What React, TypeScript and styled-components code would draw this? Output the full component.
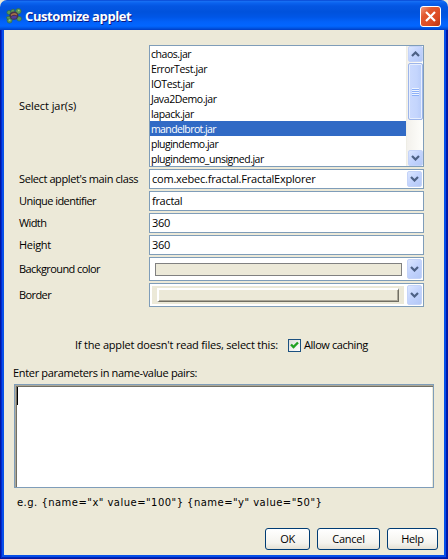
import React from "react";
import styled, { createGlobalStyle } from "styled-components";

const Global = createGlobalStyle`
  *, *::before, *::after { box-sizing: border-box; }
  html, body, #root { margin: 0; height: 100%; }
  body { background: #ece9d8; overflow: hidden; }
`;

const Window = styled.div`
  width: 448px;
  height: 559px;
  display: flex;
  flex-direction: column;
  background: #ece9d8;
  border-radius: 7px 7px 0 0;
  overflow: hidden;
  color: #000;
  font: 11px/14px "Open Sans", "Noto Sans", sans-serif;
`;

const TitleBar = styled.header`
  flex: none;
  height: 30px;
  display: flex;
  align-items: center;
  padding: 2px 7px 0 6px;
  background: linear-gradient(
    #0034c4 0, #1a72f4 1px, #0a62ee 3px, #0456e2 6px, #0052dc 12px,
    #0056e6 17px, #0262fa 22px, #0266ff 26px, #0056e4 28px, #003cc4 30px
  );
`;

const Title = styled.h1<{ $ls: number }>`
  flex: 1;
  margin: 0 0 0 3px;
  color: #fff;
  font: bold 13px/18px "Open Sans", sans-serif;
  letter-spacing: ${(p) => p.$ls}px;
  text-shadow: 1px 1px 0 #0a1883;
  white-space: nowrap;
`;

const CloseButton = styled.button`
  width: 21px;
  height: 21px;
  margin-top: 1px;
  padding: 0;
  display: grid;
  place-items: center;
  border: 1px solid #fff;
  border-radius: 3px;
  background: linear-gradient(135deg, #f09a80 0, #e2582f 30%, #dc4a22 70%, #b83412 100%);
`;

const Frame = styled.div`
  flex: 1;
  min-height: 0;
  display: flex;
  border: solid;
  border-width: 0 1px 1px;
  border-color: #0018a0;
  background: #0650e8;
  padding: 0 3px 3px;
  box-shadow: inset 1px 0 #0028d4, inset -1px 0 #0018b0, inset 0 -1px #0024bc;
`;

const Body = styled.main`
  flex: 1;
  display: flex;
  flex-direction: column;
  padding: 15px 6px 5px 9px;
  background: #ece9d8;
`;

const Form = styled.div`
  display: grid;
  grid-template-columns: 130px 275px;
  grid-template-rows: 122px 20px 20px 20px 20px 24px 24px;
  gap: 2px 0;
  margin-left: 6px;
  align-items: stretch;
`;

const Label = styled.span<{ $ls?: number }>`
  align-self: center;
  white-space: nowrap;
  letter-spacing: ${(p) => p.$ls ?? 0}px;
`;

const Box = styled.div`
  display: flex;
  border: 1px solid #7f9db9;
  background: #fff;
`;

const Field = styled(Box)`
  align-items: center;
  padding: 0 2px;
`;

const Combo = styled(Box)`
  padding: 1px;
`;

const ComboValue = styled.div<{ $inset: string }>`
  flex: 1;
  display: flex;
  align-items: center;
  padding: ${(p) => p.$inset};
`;

const List = styled.ul`
  flex: 1;
  margin: 0;
  padding: 0;
  list-style: none;
`;

const Item = styled.li<{ $selected: boolean; $ls: number }>`
  height: 15px;
  padding-left: 1px;
  font-size: 10.5px;
  line-height: 16px;
  white-space: nowrap;
  letter-spacing: ${(p) => p.$ls}px;
  background: ${(p) => (p.$selected ? "#316ac5" : "transparent")};
  color: ${(p) => (p.$selected ? "#fff" : "#000")};
`;

const ScrollBar = styled.div`
  width: 17px;
  display: flex;
  flex-direction: column;
  padding-left: 1px;
  border-left: 1px solid #eeede5;
  background: linear-gradient(90deg, #f3f1ec, #fefefb);
`;

const ArrowButton = styled.div<{ $h: number }>`
  flex: none;
  width: 15px;
  height: ${(p) => p.$h}px;
  display: grid;
  place-items: center;
  border: 1px solid #c4d3f8;
  border-radius: 2px;
  background: linear-gradient(135deg, #dbe6ff, #c2d3fd 50%, #b4c8f6);
`;

const Thumb = styled.div`
  width: 15px;
  height: 57px;
  margin-top: 1px;
  display: grid;
  place-items: center;
  border: 1px solid #9db5ea;
  border-radius: 2px;
  box-shadow: inset 0 0 0 1px #e8effe;
  background: linear-gradient(90deg, #cbdafe, #c4d5fd 60%, #b7cbf9);
`;

const Grip = styled.div`
  width: 7px;
  height: 8px;
  background: repeating-linear-gradient(#eef4fe 0 1px, #8cb0f8 1px 2px);
`;

const Spacer = styled.div`
  flex: 1;
`;

const ColorSwatch = styled.div`
  flex: 1;
  height: 13px;
  border: 1px solid #808080;
  background: #ece9d8;
`;

const BorderSample = styled.div`
  flex: 1;
  height: 18px;
  padding: 2px 5px;
  background: #ece9d8;
`;

const Bevel = styled.div`
  height: 14px;
  border: solid;
  border-width: 2px 1px 1px 2px;
  border-color: #fff #716f64 #716f64 #fff;
  box-shadow: inset -1px -1px #aca899;
  background: #ece9d8;
`;

const CacheRow = styled.div`
  height: 14px;
  margin: 31px 0 0 62px;
  display: flex;
  align-items: center;
`;

const CheckBox = styled.span`
  width: 13px;
  height: 13px;
  margin: 0 3px 0 10px;
  display: grid;
  place-items: center;
  border: 1px solid #1c5180;
  background: linear-gradient(135deg, #dcdcd7, #fff);
`;

const PromptRow = styled.div`
  display: flex;
  height: 14px;
  margin-top: 14px;
`;

const TextArea = styled.div`
  width: 420px;
  height: 104px;
  margin: 4px 0 0 1px;
  border: 1px solid #7f9db9;
  background: #fff;
  box-shadow: inset 1px 1px #aca899, inset 2px 2px #716f64, inset -1px 0 #ece9d8;
  padding: 2px;
`;

const Caret = styled.div`
  width: 1px;
  height: 18px;
  background: #000;
`;

const Example = styled.div`
  height: 14px;
  margin: 8px 0 0 4px;
  font: 10px/14px "DejaVu Sans", sans-serif;
  letter-spacing: 0.47px;
  white-space: nowrap;
`;

const Buttons = styled.footer`
  display: flex;
  justify-content: flex-end;
  gap: 7px;
  margin-top: auto;
`;

const Button = styled.button<{ $w: number; $ls: number }>`
  width: ${(p) => p.$w}px;
  height: 22px;
  padding: 0;
  border: 1px solid #003c74;
  border-radius: 3px;
  background: linear-gradient(#fff, #f4f3ee 70%, #e4e0d4);
  color: #000;
  font: inherit;
  letter-spacing: ${(p) => p.$ls}px;
`;

const Chevron = ({ up }: { up?: boolean }) => (
  <svg width="9" height="6" viewBox="0 0 9 6">
    <path
      d={up ? "M1 5 L4.5 1.5 L8 5" : "M1 1 L4.5 4.5 L8 1"}
      fill="none"
      stroke="#4d6185"
      strokeWidth="2.2"
    />
  </svg>
);

const TurtleIcon = () => (
  <svg width="16" height="16" viewBox="0 0 16 16">
    <g fill="#5d9658" stroke="#31693f" strokeWidth="0.6">
      <circle cx="12.4" cy="3.2" r="2.7" />
      <circle cx="3" cy="4.5" r="2.1" />
      <circle cx="3.6" cy="12.6" r="2.5" />
      <circle cx="13.2" cy="10.8" r="2.3" />
      <path d="M5 2 L8 1 L9 5 L5 6Z M0.5 9 L4 8 L5 11 L1 11Z" />
    </g>
    <ellipse cx="7.9" cy="7.6" rx="4.5" ry="4.2" fill="#493447" />
    <path d="M4.8 6.5 Q8 3.5 11.2 6.2 L10.5 7.5 Q8 6 5.2 8Z" fill="#a36f48" />
    <path d="M5 9 Q8 7 11 8.5 L10 10.5 L6 10.8Z" fill="#513c9b" />
    <circle cx="12.8" cy="2.6" r="0.8" fill="#b0cd7a" />
    <circle cx="3.6" cy="12.2" r="0.9" fill="#a6c568" />
  </svg>
);

const jars: [string, number][] = [
  ["chaos.jar", -0.45],
  ["ErrorTest.jar", -0.38],
  ["IOTest.jar", -0.38],
  ["Java2Demo.jar", -0.4],
  ["lapack.jar", -0.4],
  ["mandelbrot.jar", -0.6],
  ["plugindemo.jar", -0.5],
  ["plugindemo_unsigned.jar", -0.48],
];

export default function App() {
  return (
    <>
      <Global />
      <Window>
        <TitleBar>
          <TurtleIcon />
          <Title $ls={-0.4}>Customize applet</Title>
          <CloseButton aria-label="Close">
            <svg width="13" height="13" viewBox="0 0 13 13">
              <path d="M2 2 L11 11 M11 2 L2 11" stroke="#fff" strokeWidth="2.2" />
            </svg>
          </CloseButton>
        </TitleBar>
        <Frame>
          <Body>
            <Form>
              <Label $ls={-0.08}>Select jar(s)</Label>
              <Box>
                <List>
                  {jars.map(([name, ls]) => (
                    <Item key={name} $ls={ls} $selected={name === "mandelbrot.jar"}>
                      {name}
                    </Item>
                  ))}
                </List>
                <ScrollBar>
                  <ArrowButton $h={16}><Chevron up /></ArrowButton>
                  <Thumb><Grip /></Thumb>
                  <Spacer />
                  <ArrowButton $h={16}><Chevron /></ArrowButton>
                </ScrollBar>
              </Box>

              <Label $ls={-0.4}>Select applet's main class</Label>
              <Combo>
                <ComboValue $inset="0 0 0 1px">
                  <Label $ls={-0.22}>com.xebec.fractal.FractalExplorer</Label>
                </ComboValue>
                <ArrowButton $h={16}><Chevron /></ArrowButton>
              </Combo>

              <Label $ls={-0.55}>Unique identifier</Label>
              <Field><Label $ls={-0.3}>fractal</Label></Field>

              <Label $ls={-0.6}>Width</Label>
              <Field><Label $ls={-0.35}>360</Label></Field>

              <Label $ls={-0.3}>Height</Label>
              <Field><Label $ls={-0.35}>360</Label></Field>

              <Label $ls={-0.58}>Background color</Label>
              <Combo>
                <ComboValue $inset="0 5px 0 4px"><ColorSwatch /></ComboValue>
                <ArrowButton $h={20}><Chevron /></ArrowButton>
              </Combo>

              <Label $ls={-0.6}>Border</Label>
              <Combo>
                <ComboValue $inset="0 3px 0 1px">
                  <BorderSample><Bevel /></BorderSample>
                </ComboValue>
                <ArrowButton $h={20}><Chevron /></ArrowButton>
              </Combo>
            </Form>

            <CacheRow>
              <Label $ls={-0.2}>If the applet doesn't read files, select this:</Label>
              <CheckBox>
                <svg width="9" height="9" viewBox="0 0 9 9">
                  <path d="M1 3.5 L3.5 6 L8 1.5" fill="none" stroke="#21a121" strokeWidth="2.4" />
                </svg>
              </CheckBox>
              <Label $ls={-0.42}>Allow caching</Label>
            </CacheRow>

            <PromptRow>
              <Label $ls={-0.33}>Enter parameters in name-value pairs:</Label>
            </PromptRow>
            <TextArea><Caret /></TextArea>
            <Example>{'e.g. {name="x" value="100"} {name="y" value="50"}'}</Example>

            <Buttons>
              <Button $w={45} $ls={-0.5}>OK</Button>
              <Button $w={63} $ls={-0.25}>Cancel</Button>
              <Button $w={51} $ls={-0.3}>Help</Button>
            </Buttons>
          </Body>
        </Frame>
      </Window>
    </>
  );
}
